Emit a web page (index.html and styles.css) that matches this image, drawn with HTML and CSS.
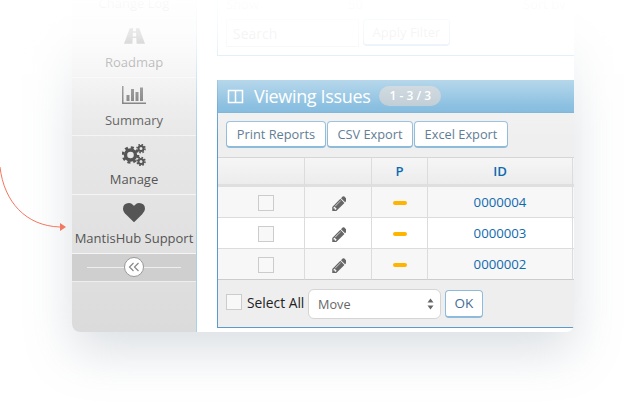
FILE: index.html
```html
<!DOCTYPE html>
<html lang="en">
<head>
<meta charset="UTF-8">
<meta name="viewport" content="width=device-width, initial-scale=1.0">
<title>Viewing Issues</title>
<link rel="stylesheet" href="styles.css">
</head>
<body>
<div class="page">
    <!-- Arrow pointing at the support item -->
    <svg class="arrow" width="70" height="104" viewBox="0 0 70 104">
        <path d="M0 37 C4 72 26 96 60 97" fill="none" stroke="#f4775f" stroke-width="1"/>
        <path d="M60 93 L66 97 L60 101 Z" fill="#f4775f"/>
    </svg>

    <div class="window">
        <div class="sidebar">
            <div class="navItem navCut">Change Log</div>
            <div class="navItem">
                <svg class="navIcon" width="21" height="16" viewBox="0 0 22 16">
                    <path d="M6 0 H9.6 L9.4 3 H12.6 L12.4 0 H16 L22 16 H13.2 L12.9 10 H9.1 L8.8 16 H0 Z M9.3 4.5 L9.2 8.5 H12.8 L12.7 4.5 Z" fill="#555" fill-rule="evenodd"/>
                </svg>
                <span>Roadmap</span>
            </div>
            <div class="navItem">
                <svg class="navIcon" width="24" height="18" viewBox="0 0 2048 1536">
                    <path d="M640 768v512h-256v-512h256zm384-512v1024h-256v-1024h256zm1024 1152v128h-2048v-1536h128v1408h1920zm-640-896v768h-256v-768h256zm384-384v1152h-256v-1152h256z" fill="#666"/>
                </svg>
                <span>Summary</span>
            </div>
            <div class="navItem navTall">
                <svg class="navIcon" width="24" height="22" viewBox="0 0 24 22">
                    <g fill="none" stroke="#555">
                        <circle cx="8.5" cy="11" r="5" stroke-width="3.4"/>
                        <circle cx="8.5" cy="11" r="7.5" stroke-width="2.6" stroke-dasharray="3 2.9"/>
                        <circle cx="19" cy="4.6" r="2.5" stroke-width="2"/>
                        <circle cx="19" cy="4.6" r="4" stroke-width="1.6" stroke-dasharray="1.6 1.54"/>
                        <circle cx="19" cy="17.4" r="2.5" stroke-width="2"/>
                        <circle cx="19" cy="17.4" r="4" stroke-width="1.6" stroke-dasharray="1.6 1.54"/>
                    </g>
                </svg>
                <span>Manage</span>
            </div>
            <div class="navItem navTall">
                <svg class="navIcon" width="22" height="19" viewBox="0 128 1792 1536">
                    <path d="M896 1664q-26 0-44-18l-624-602q-10-8-27.5-26t-55.5-65.5-68-97.5-53.5-121-23.5-138q0-220 127-344t351-124q62 0 126.5 21.5t120 58 95.5 68.5 76 68q36-36 76-68t95.5-68.5 120-58 126.5-21.5q224 0 351 124t127 344q0 221-229 450l-623 600q-18 18-44 18z" fill="#555"/>
                </svg>
                <span>MantisHub Support</span>
            </div>
            <div class="collapseBar">
                <div class="collapseLine"></div>
                <div class="collapseBtn">
                    <svg width="12" height="10" viewBox="0 0 12 10">
                        <path d="M5.5 1 L1.5 5 L5.5 9 M10.5 1 L6.5 5 L10.5 9" fill="none" stroke="#888" stroke-width="1.2"/>
                    </svg>
                </div>
            </div>
        </div>

        <div class="main">
            <div class="filterBox">
                <div class="filterLabels">
                    <span class="labelShow">Show</span>
                    <span class="labelNum">50</span>
                    <span>Sort by</span>
                </div>
                <div class="filterRow">
                    <div class="searchBox">Search</div>
                    <div class="applyBtn">Apply Filter</div>
                </div>
            </div>

            <div class="issuesBox">
                <div class="issuesHead">
                    <svg width="17" height="15" viewBox="0 0 17 15">
                        <path d="M1.5 1.5 H15.5 V13.5 H1.5 Z M8.5 1.5 V13.5" fill="none" stroke="#fff" stroke-width="1.5"/>
                    </svg>
                    <span class="issuesTitle">Viewing Issues</span>
                    <span class="badge">1 - 3 / 3</span>
                </div>
                <div class="toolbar">
                    <div class="toolBtn btnPrint">Print Reports</div>
                    <div class="toolBtn btnCsv">CSV Export</div>
                    <div class="toolBtn btnExcel">Excel Export</div>
                </div>
                <table class="issuesTable">
                    <colgroup>
                        <col class="colCheck">
                        <col class="colEdit">
                        <col class="colPrio">
                        <col class="colId">
                        <col>
                    </colgroup>
                    <thead>
                        <tr><th></th><th></th><th>P</th><th>ID</th><th></th></tr>
                    </thead>
                    <tbody id="issueRows">
                        <tr>
                            <td class="checkCell"><span class="checkBox"></span></td>
                            <td><svg class="pencil" width="15" height="15" viewBox="0 128 1536 1536"><path d="M491 1536l91-91-235-235-91 91v107h128v128h107zm523-928q0-22-22-22-10 0-17 7l-542 542q-7 7-7 17 0 22 22 22 10 0 17-7l542-542q7-7 7-17zm-54-192l416 416-832 832h-416v-416zm683 96q0 53-37 90l-166 166-416-416 166-165q36-38 90-38 53 0 91 38l235 234q37 39 37 91z" fill="#666"/></svg></td>
                            <td><span class="dash"></span></td>
                            <td>0000004</td>
                            <td></td>
                        </tr>
                        <tr>
                            <td class="checkCell"><span class="checkBox"></span></td>
                            <td><svg class="pencil" width="15" height="15" viewBox="0 128 1536 1536"><path d="M491 1536l91-91-235-235-91 91v107h128v128h107zm523-928q0-22-22-22-10 0-17 7l-542 542q-7 7-7 17 0 22 22 22 10 0 17-7l542-542q7-7 7-17zm-54-192l416 416-832 832h-416v-416zm683 96q0 53-37 90l-166 166-416-416 166-165q36-38 90-38 53 0 91 38l235 234q37 39 37 91z" fill="#666"/></svg></td>
                            <td><span class="dash"></span></td>
                            <td>0000003</td>
                            <td></td>
                        </tr>
                        <tr>
                            <td class="checkCell"><span class="checkBox"></span></td>
                            <td><svg class="pencil" width="15" height="15" viewBox="0 128 1536 1536"><path d="M491 1536l91-91-235-235-91 91v107h128v128h107zm523-928q0-22-22-22-10 0-17 7l-542 542q-7 7-7 17 0 22 22 22 10 0 17-7l542-542q7-7 7-17zm-54-192l416 416-832 832h-416v-416zm683 96q0 53-37 90l-166 166-416-416 166-165q36-38 90-38 53 0 91 38l235 234q37 39 37 91z" fill="#666"/></svg></td>
                            <td><span class="dash"></span></td>
                            <td>0000002</td>
                            <td></td>
                        </tr>
                    </tbody>
                </table>
                <div class="issuesFoot">
                    <span class="checkBox footCheck"></span>
                    <span class="selectAll">Select All</span>
                    <div class="moveSelect">
                        <span>Move</span>
                        <svg width="7" height="12" viewBox="0 0 7 12">
                            <path d="M3.5 0.5 L6.5 4.5 H0.5 Z M3.5 11.5 L6.5 7.5 H0.5 Z" fill="#666"/>
                        </svg>
                    </div>
                    <div class="okBtn">OK</div>
                </div>
            </div>
        </div>
    </div>

    <!-- White fade over the top of the picture -->
    <div class="topFade"></div>
</div>
</body>
</html>
```

FILE: styles.css
```css
/* Page */
html, body {
    margin: 0;
    padding: 0;
    background: #fff;
}

.page {
    position: relative;
    width: 629px;
    height: 407px;
    overflow: hidden;
    font-family: "Open Sans", sans-serif;
}

.arrow {
    position: absolute;
    left: 0;
    top: 130px;
}

.topFade {
    position: absolute;
    left: 0;
    top: 0;
    width: 100%;
    height: 140px;
    background: linear-gradient(to bottom, rgba(255,255,255,0.98) 0, rgba(255,255,255,0.85) 35px, rgba(255,255,255,0.6) 65px, rgba(255,255,255,0.2) 105px, rgba(255,255,255,0) 140px);
}

.window {
    display: flex;
    width: 502px;
    height: 332px;
    margin-left: 72px;
    border-radius: 0 0 8px 8px;
    background: #fff;
    box-shadow: 0 20px 48px rgba(120, 135, 150, 0.26);
    overflow: hidden;
}

/* Sidebar */
.sidebar {
    width: 124px;
    flex-shrink: 0;
    background: linear-gradient(to bottom, #f0f0f0, #dbdbdb);
    border-right: 1px solid #a6d0ec;
}

.navItem {
    display: flex;
    flex-direction: column;
    align-items: center;
    height: 58px;
    box-sizing: border-box;
    padding-top: 8px;
    border-bottom: 1px solid #f5f5f5;
    color: #555;
    font-size: 13px;
    line-height: 18px;
    white-space: nowrap;
}

.navItem span {
    margin-top: auto;
    margin-bottom: 6px;
}

.navCut {
    height: 20px;
    padding-top: 0;
    padding-bottom: 8px;
    border-bottom: none;
    justify-content: flex-end;
}

.navTall {
    height: 59px;
}

.navIcon {
    display: block;
}

.collapseBar {
    position: relative;
    display: flex;
    align-items: center;
    justify-content: center;
    height: 28px;
    box-sizing: border-box;
    background: #cfcfcf;
    border-bottom: 1px solid #eee;
}

.collapseLine {
    width: 94px;
    height: 1px;
    background: #eee;
}

.collapseBtn {
    position: absolute;
    left: 52px;
    top: 3px;
    display: flex;
    align-items: center;
    justify-content: center;
    width: 18px;
    height: 18px;
    border: 1px solid #999;
    border-radius: 50%;
    background: #fff;
}

/* Main area */
.main {
    flex: 1;
    min-width: 0;
    padding-left: 20px;
}

.filterBox {
    height: 56px;
    box-sizing: border-box;
    border-left: 1px solid #a6d0ec;
    border-bottom: 1px solid #a6d0ec;
    padding: 0 0 0 8px;
    color: #bbb;
}

.filterLabels {
    display: flex;
    height: 9px;
    overflow: hidden;
    font-size: 13px;
    line-height: 9px;
}

.labelShow {
    width: 122px;
}

.labelNum {
    width: 175px;
}

.filterRow {
    display: flex;
    gap: 4px;
    margin-top: 10px;
}

.searchBox {
    width: 133px;
    height: 28px;
    box-sizing: border-box;
    border: 1px solid #e4e4e4;
    padding: 0 6px;
    font-size: 14px;
    line-height: 28px;
}

.applyBtn {
    width: 87px;
    height: 27px;
    box-sizing: border-box;
    border: 1px solid #b5d3e8;
    border-bottom-width: 2px;
    border-radius: 4px;
    text-align: center;
    font-size: 13px;
    line-height: 25px;
}

.issuesBox {
    margin-top: 24px;
    width: 360px;
    height: 248px;
    box-sizing: border-box;
    border-left: 1px solid #5a9bcf;
    border-bottom: 1px solid #5a9bcf;
    background: #eee;
}

.issuesHead {
    display: flex;
    align-items: center;
    height: 33px;
    box-sizing: border-box;
    padding-left: 9px;
    background: linear-gradient(to bottom, #7ab7dc, #6fb0d9);
    border-bottom: 1px solid #6aaad4;
    color: #fff;
}

.issuesTitle {
    margin-left: 10px;
    font-size: 18px;
    letter-spacing: -0.35px;
    line-height: 26px;
}

.badge {
    margin-left: 9px;
    width: 62px;
    height: 20px;
    border-radius: 10px;
    background: #b4c3ce;
    text-align: center;
    font-size: 12px;
    font-weight: 600;
    line-height: 20px;
}

.toolbar {
    display: flex;
    gap: 1px;
    height: 44px;
    box-sizing: border-box;
    padding: 8px 0 0 8px;
    background: #efefef;
}

.toolBtn {
    height: 27px;
    box-sizing: border-box;
    border: 1px solid #8fbbdb;
    border-bottom-width: 2px;
    border-radius: 4px;
    background: #fff;
    color: #5d7a92;
    text-align: center;
    font-size: 12.8px;
    line-height: 25px;
}

.btnPrint { width: 100px; }
.btnCsv { width: 86px; }
.btnExcel { width: 94px; }

/* Table */
.issuesTable {
    width: 356px;
    table-layout: fixed;
    border-collapse: separate;
    border-spacing: 0;
}

.colCheck { width: 87px; }
.colEdit { width: 67px; }
.colPrio { width: 56px; }
.colId { width: 145px; }

.issuesTable th,
.issuesTable td {
    padding: 0;
    border-right: 1px solid #dcdcdc;
    border-bottom: 1px solid #dcdcdc;
    text-align: center;
    vertical-align: middle;
    color: #0e6ab0;
    font-size: 13.2px;
    font-weight: 400;
}

.issuesTable th:last-child,
.issuesTable td:last-child {
    border-right: none;
}

.issuesTable thead tr {
    height: 30px;
    background: linear-gradient(to bottom, #f6f6f6, #ebebeb);
}

.issuesTable th {
    border-top: 1px solid #d6d6d6;
    border-bottom: 3px solid #dfdfdf;
    font-weight: 600;
}

.issuesTable tbody tr {
    height: 31px;
    background: #fff;
}

.issuesTable tbody tr:nth-child(odd) {
    background: #f7f7f7;
}

.issuesTable tbody tr:last-child td {
    border-bottom: 1px solid #ccc;
}

.issuesTable .checkCell {
    padding-left: 10px;
}

.checkBox {
    display: inline-block;
    vertical-align: middle;
    width: 16px;
    height: 16px;
    flex-shrink: 0;
    box-sizing: border-box;
    border: 1px solid #ccc;
    background: #f8f8f8;
}

.pencil {
    display: inline-block;
    vertical-align: middle;
}

.dash {
    display: inline-block;
    vertical-align: middle;
    width: 14px;
    height: 4px;
    border-radius: 2px;
    background: #ffb400;
}

/* Footer row */
.issuesFoot {
    display: flex;
    align-items: center;
    height: 47px;
    box-sizing: border-box;
    padding-left: 8px;
    background: #eee;
}

.footCheck {
    margin-bottom: 3px;
}

.selectAll {
    width: 61px;
    margin-left: 5px;
    margin-bottom: 3px;
    color: #222;
    font-size: 13.8px;
    white-space: nowrap;
}

.moveSelect {
    display: flex;
    align-items: center;
    justify-content: space-between;
    width: 133px;
    height: 30px;
    box-sizing: border-box;
    padding: 0 6px 0 9px;
    border: 1px solid #d5d5d5;
    border-radius: 6px;
    background: #fff;
    color: #666;
    font-size: 12.7px;
}

.okBtn {
    width: 38px;
    height: 28px;
    box-sizing: border-box;
    margin-left: 4px;
    border: 1px solid #8fbbdb;
    border-bottom-width: 2px;
    border-radius: 4px;
    background: #fff;
    color: #3f6d94;
    text-align: center;
    font-size: 13.5px;
    line-height: 25px;
}
```
